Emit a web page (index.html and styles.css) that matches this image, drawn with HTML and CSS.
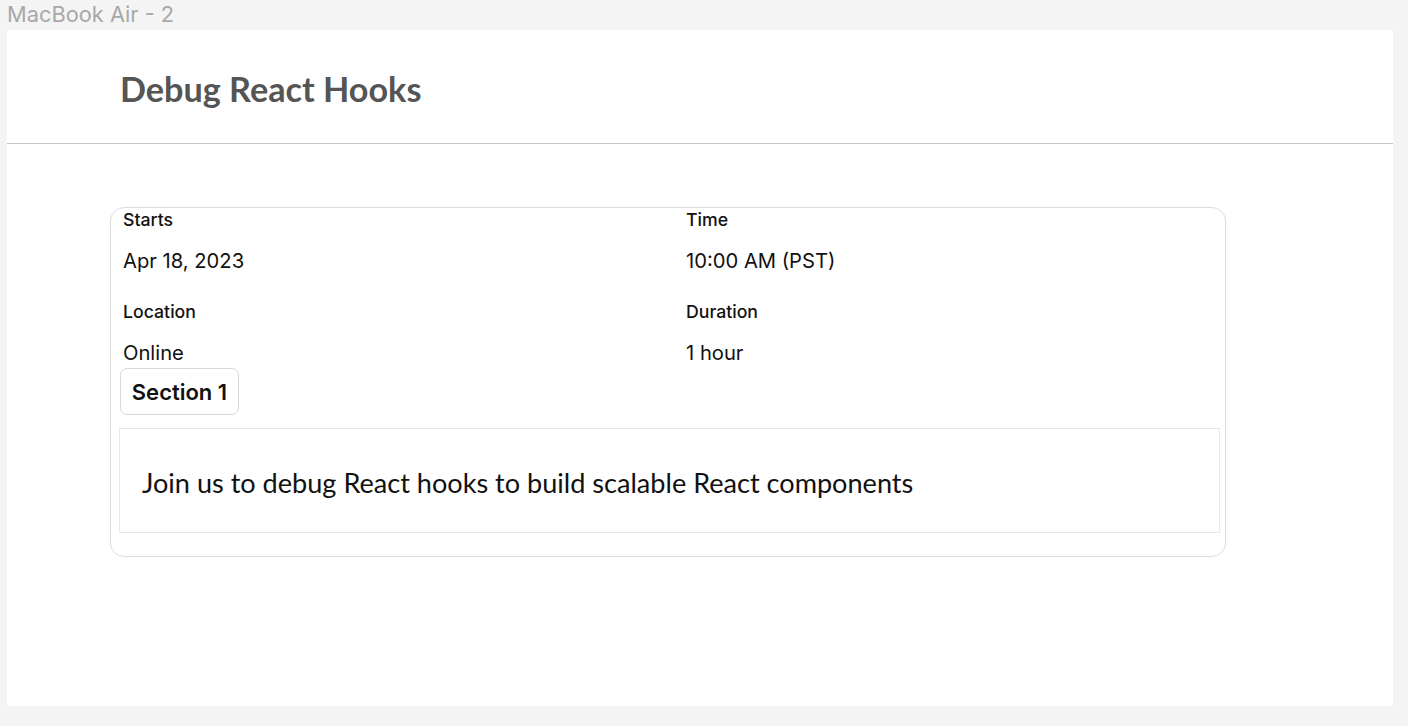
FILE: index.html
```html
<!DOCTYPE html>
<html>
<head>
<meta charset="utf-8">
<link rel="stylesheet" href="styles.css">
</head>
<body>
<div class="frame-label">MacBook Air - 2</div>
<div class="frame">
  <header class="page-header">
    <h1 class="title">Debug React Hooks</h1>
  </header>
  <section class="card">
    <div class="details">
      <div class="detail">
        <div class="detail-label">Starts</div>
        <div class="detail-value">Apr 18, 2023</div>
      </div>
      <div class="detail">
        <div class="detail-label">Time</div>
        <div class="detail-value">10:00 AM (PST)</div>
      </div>
      <div class="detail">
        <div class="detail-label">Location</div>
        <div class="detail-value">Online</div>
      </div>
      <div class="detail">
        <div class="detail-label">Duration</div>
        <div class="detail-value">1 hour</div>
      </div>
    </div>
    <button class="section-btn">Section 1</button>
    <div class="description">Join us to debug React hooks to build scalable React components</div>
  </section>
</div>
</body>
</html>
```

FILE: styles.css
```css
* { box-sizing: border-box; }
body {
  margin: 0;
  background: #f4f4f4;
  font-family: "Inter", "Liberation Sans", sans-serif;
}
.frame-label {
  height: 30px;
  padding: 1px 0 0 7px;
  font-size: 21.8px;
  line-height: 26px;
  color: #a8a8a8;
}
.frame {
  margin-left: 7px;
  width: 1386px;
  height: 676px;
  background: #fff;
}
.page-header {
  height: 114px;
  padding-left: 113px;
  border-bottom: 1px solid #c6c6c6;
  display: flex;
  align-items: center;
}
.title {
  margin: 0;
  padding-top: 4px;
  font-family: "Lato", sans-serif;
  font-weight: 700;
  font-size: 34.2px;
  line-height: 40px;
  color: #555;
}
.card {
  margin: 63px 0 0 103px;
  width: 1116px;
  border: 1px solid #dcdcdc;
  border-radius: 14px;
  padding: 2px 5px 23px 8px;
}
.details {
  display: grid;
  grid-template-columns: 563px 1fr;
  row-gap: 29px;
  padding-left: 4px;
}
.detail-label {
  font-size: 17.7px;
  line-height: 20px;
  font-weight: 500;
  color: #111;
}
.detail-value {
  margin-top: 19px;
  font-size: 20.2px;
  line-height: 24px;
  color: #111;
}
.section-btn {
  display: block;
  margin: 3px 0 0 1px;
  width: 119px;
  height: 47px;
  border: 1px solid #d8d8d8;
  border-radius: 7px;
  background: #fff;
  font-family: "Inter", "Liberation Sans", sans-serif;
  font-size: 22px;
  font-weight: 600;
  color: #111;
  padding: 0;
}
.description {
  margin-top: 13px;
  border: 1px solid #e8e8e8;
  height: 105px;
  padding: 37px 22px 0;
  font-family: "Lato", sans-serif;
  font-size: 27.1px;
  line-height: 34px;
  color: #111;
}
```
